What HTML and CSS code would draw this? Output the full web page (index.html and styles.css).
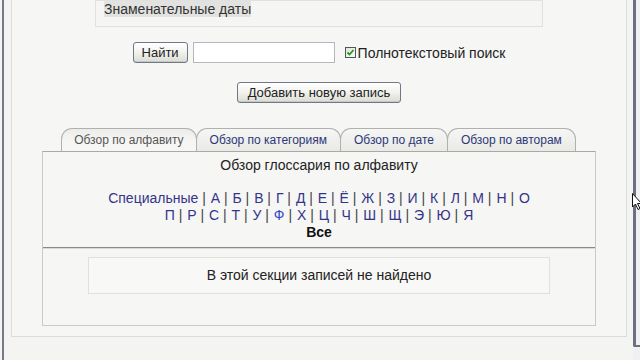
FILE: index.html
```html
<!DOCTYPE html>
<html lang="ru">
<head>
    <meta charset="UTF-8">
    <title>Глоссарий</title>
    <link rel="stylesheet" href="styles.css">
</head>
<body>
    <div class="screen">
        <div class="frame">
            <div class="page">
                <div class="topBox">
                    <span class="marked">Знаменательные даты</span>
                </div>

                <form class="searchRow" onsubmit="return false">
                    <button class="xpButton findButton">Найти</button>
                    <input class="searchInput" type="text">
                    <label class="fullText">
                        <span class="checkBox">
                            <svg width="9" height="9" viewBox="0 0 9 9">
                                <path d="M1.5 4.5 L3.5 6.5 L7.5 2" fill="none" stroke="#1f9a1f" stroke-width="1.8"/>
                            </svg>
                        </span>
                        Полнотекстовый поиск
                    </label>
                </form>

                <div class="addRow">
                    <button class="xpButton">Добавить новую запись</button>
                </div>

                <div class="tabRow">
                    <span class="tab active">Обзор по алфавиту</span>
                    <a class="tab" href="#">Обзор по категориям</a>
                    <a class="tab" href="#">Обзор по дате</a>
                    <a class="tab" href="#">Обзор по авторам</a>
                </div>

                <div class="tabBox">
                    <div class="browse">
                        <div class="browseTitle">Обзор глоссария по алфавиту</div>
                        <div class="letters" id="letters"></div>
                        <div class="allLink">Все</div>
                    </div>
                    <div class="entries">
                        <div class="emptyBox">В этой секции записей не найдено</div>
                    </div>
                </div>
            </div>
        </div>
        <div class="scrollArea">
            <div class="scrollEdge"></div>
        </div>
        <svg class="cursor" width="10" height="18" viewBox="0 0 10 18">
            <path d="M0.5 0.5 L0.5 14 L3.5 11 L6 16.5 L8 15.5 L5.5 10.5 L9.5 10.5 Z" fill="#fff" stroke="#111" stroke-width="1"/>
        </svg>
    </div>

    <script>
        // Two rows of letters, broken after "О" like the original page
        const rows = [
            ['Специальные', 'А', 'Б', 'В', 'Г', 'Д', 'Е', 'Ё', 'Ж', 'З', 'И', 'К', 'Л', 'М', 'Н', 'О'],
            ['П', 'Р', 'С', 'Т', 'У', 'Ф', 'Х', 'Ц', 'Ч', 'Ш', 'Щ', 'Э', 'Ю', 'Я']
        ];
        const letters = document.getElementById('letters');
        rows.forEach((row, i) => {
            const line = document.createElement('div');
            row.forEach((item, j) => {
                if (j > 0) {
                    const sep = document.createElement('span');
                    sep.className = 'sep';
                    sep.textContent = ' | ';
                    line.appendChild(sep);
                }
                const link = document.createElement('a');
                link.href = '#';
                link.textContent = item;
                if (item == 'Ф') {
                    link.className = 'fresh';
                }
                line.appendChild(link);
            });
            letters.appendChild(line);
        });
    </script>
</body>
</html>
```

FILE: styles.css
```css
body {
    margin: 0;
    background-color: #f4f4f2;
    font-family: "Liberation Sans", Arial, sans-serif;
    font-size: 14px;
    color: #222;
    overflow: hidden;
}
a {
    text-decoration: none;
}
.screen {
    display: flex;
    height: 360px;
    position: relative;
}
.frame {
    flex: 1;
    margin-left: 2px;
    border-left: 2px solid #767a88;
    padding: 0 6px 0 7px;
    overflow: hidden;
}
.page {
    margin-top: -16px;
    border: 1px solid #dcdcda;
    background-color: #f6f6f4;
    padding: 15px 30px 10px 30px;
    display: flex;
    flex-direction: column;
    align-items: center;
}
.topBox {
    width: 430px;
    border: 1px solid #e1e1df;
    background-color: #f5f5f4;
    padding: 0 8px 9px 8px;
    line-height: 16px;
    color: #333;
}
.marked {
    background-color: #e2e2e0;
}
.searchRow {
    margin: 15px 0 0 0;
    display: flex;
    align-items: center;
    height: 21px;
}
.xpButton {
    font-family: "Liberation Sans", Arial, sans-serif;
    font-size: 13px;
    color: #222;
    height: 21px;
    padding: 0 10px;
    border: 1px solid #707888;
    border-radius: 3px;
    background: linear-gradient(#ffffff, #f3f3ef 45%, #dcdcd6);
    box-shadow: inset 0 -1px 0 #c8c8c0;
}
.findButton {
    width: 55px;
    padding: 0;
}
.searchInput {
    margin-left: 5px;
    width: 142px;
    height: 21px;
    box-sizing: border-box;
    border: 1px solid #b4b8bc;
    background-color: #fff;
    padding: 0 3px;
}
.fullText {
    margin-left: 10px;
    display: flex;
    align-items: center;
    gap: 2px;
    color: #222;
}
.checkBox {
    width: 9px;
    height: 9px;
    border: 1px solid #4a5a56;
    background: linear-gradient(135deg, #e4e4de, #fafaf8);
    display: flex;
}
.addRow {
    margin-top: 19px;
}
.tabRow {
    margin-top: 25px;
    display: flex;
    justify-content: center;
    padding-right: 2px;
    height: 23px;
}
.tab {
    display: block;
    margin-right: -1px;
    padding: 1px 13px 0 13px;
    line-height: 21px;
    font-size: 12px;
    color: #2c3878;
    border: 1px solid #b0b0ae;
    border-bottom: none;
    border-radius: 11px 11px 0 0;
    background: linear-gradient(#f6f6f4, #e9e9e6);
}
.tab.active {
    color: #555;
    padding: 1px 12px 0 12px;
    background: linear-gradient(#ececea, #f6f6f4 60%);
}
.tabBox {
    width: 552px;
    border: 1px solid #c9c9c7;
    border-top-color: #a9a9a7;
    background-color: #f6f6f4;
}
.browse {
    text-align: center;
    padding: 5px 0 6px 0;
    border-bottom: 1px solid #8a8a88;
    box-shadow: 0 1px 0 #d8d8d6;
    line-height: 17px;
}
.browseTitle {
    color: #222;
    margin-bottom: 16px;
}
.letters a {
    color: #34348a;
}
.letters a.fresh {
    color: #3848c8;
}
.sep {
    color: #444;
    padding-right: 1px;
}
.allLink {
    font-weight: bold;
    color: #111;
}
.entries {
    padding: 9px 0 31px 0;
    display: flex;
    justify-content: center;
}
.emptyBox {
    width: 460px;
    border: 1px solid #e0e0de;
    background-color: #f8f8f6;
    text-align: center;
    line-height: 17px;
    padding: 9px 0;
    color: #222;
}
.scrollArea {
    width: 7px;
    background-color: #f0f0f2;
}
.scrollEdge {
    height: 347px;
    border-left: 3px solid #6c7080;
    border-bottom: 2px solid #6c7080;
    border-bottom-left-radius: 2px;
    box-sizing: border-box;
}
.cursor {
    position: absolute;
    left: 632px;
    top: 193px;
}
```
